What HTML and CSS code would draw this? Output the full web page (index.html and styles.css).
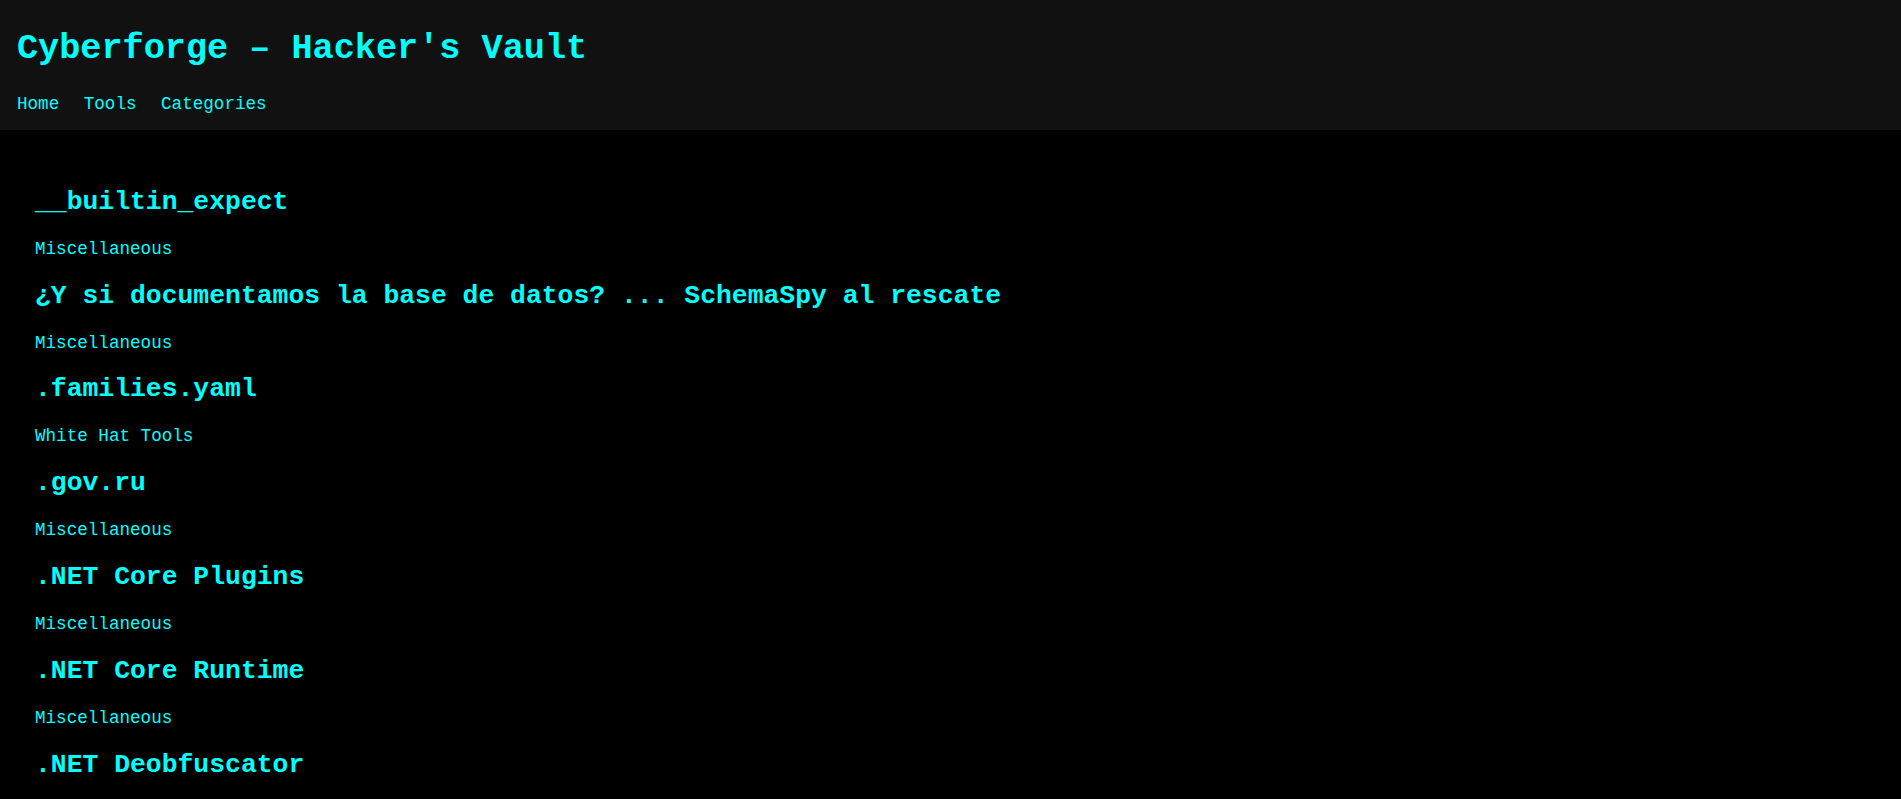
FILE: index.html
```html
<!DOCTYPE html>
<html lang="en">
<head>
<meta charset="utf-8">
<title>Cyberforge – Hacker's Vault</title>
<link rel="stylesheet" href="styles.css">
</head>
<body>
<header class="site-header">
  <h1 class="site-title">Cyberforge – Hacker's Vault</h1>
  <nav class="site-nav">
    <a href="#">Home</a>
    <a href="#">Tools</a>
    <a href="#">Categories</a>
  </nav>
</header>
<main class="tool-list">
  <div class="tool">
    <h2 class="tool-name">__builtin_expect</h2>
    <p class="tool-cat">Miscellaneous</p>
  </div>
  <div class="tool">
    <h2 class="tool-name">¿Y si documentamos la base de datos? ... SchemaSpy al rescate</h2>
    <p class="tool-cat">Miscellaneous</p>
  </div>
  <div class="tool">
    <h2 class="tool-name">.families.yaml</h2>
    <p class="tool-cat">White Hat Tools</p>
  </div>
  <div class="tool">
    <h2 class="tool-name">.gov.ru</h2>
    <p class="tool-cat">Miscellaneous</p>
  </div>
  <div class="tool">
    <h2 class="tool-name">.NET Core Plugins</h2>
    <p class="tool-cat">Miscellaneous</p>
  </div>
  <div class="tool">
    <h2 class="tool-name">.NET Core Runtime</h2>
    <p class="tool-cat">Miscellaneous</p>
  </div>
  <div class="tool">
    <h2 class="tool-name">.NET Deobfuscator</h2>
    <p class="tool-cat">Miscellaneous</p>
  </div>
</main>
</body>
</html>
```
FILE: styles.css
```css
html, body {
  margin: 0;
  padding: 0;
}
body {
  background: #000;
  color: #0ff;
  font-family: "Liberation Mono", "Courier New", monospace;
  font-size: 17.6px;
}
.site-header {
  background: #111;
  padding: 0 17px 16px;
}
.site-title {
  margin: 0;
  padding-top: 28.5px;
  font-size: 35.2px;
  font-weight: bold;
  line-height: normal;
}
.site-nav {
  display: flex;
  gap: 24.5px;
  margin-top: 25.5px;
}
.site-nav a {
  color: #0ff;
  text-decoration: none;
  font-size: 17.6px;
}
.tool-list {
  padding: 35px;
}
.tool-name {
  font-size: 26.4px;
  font-weight: bold;
  margin: 21.9px 0;
}
.tool-cat {
  font-size: 17.6px;
  margin: 17.6px 0;
}
```
